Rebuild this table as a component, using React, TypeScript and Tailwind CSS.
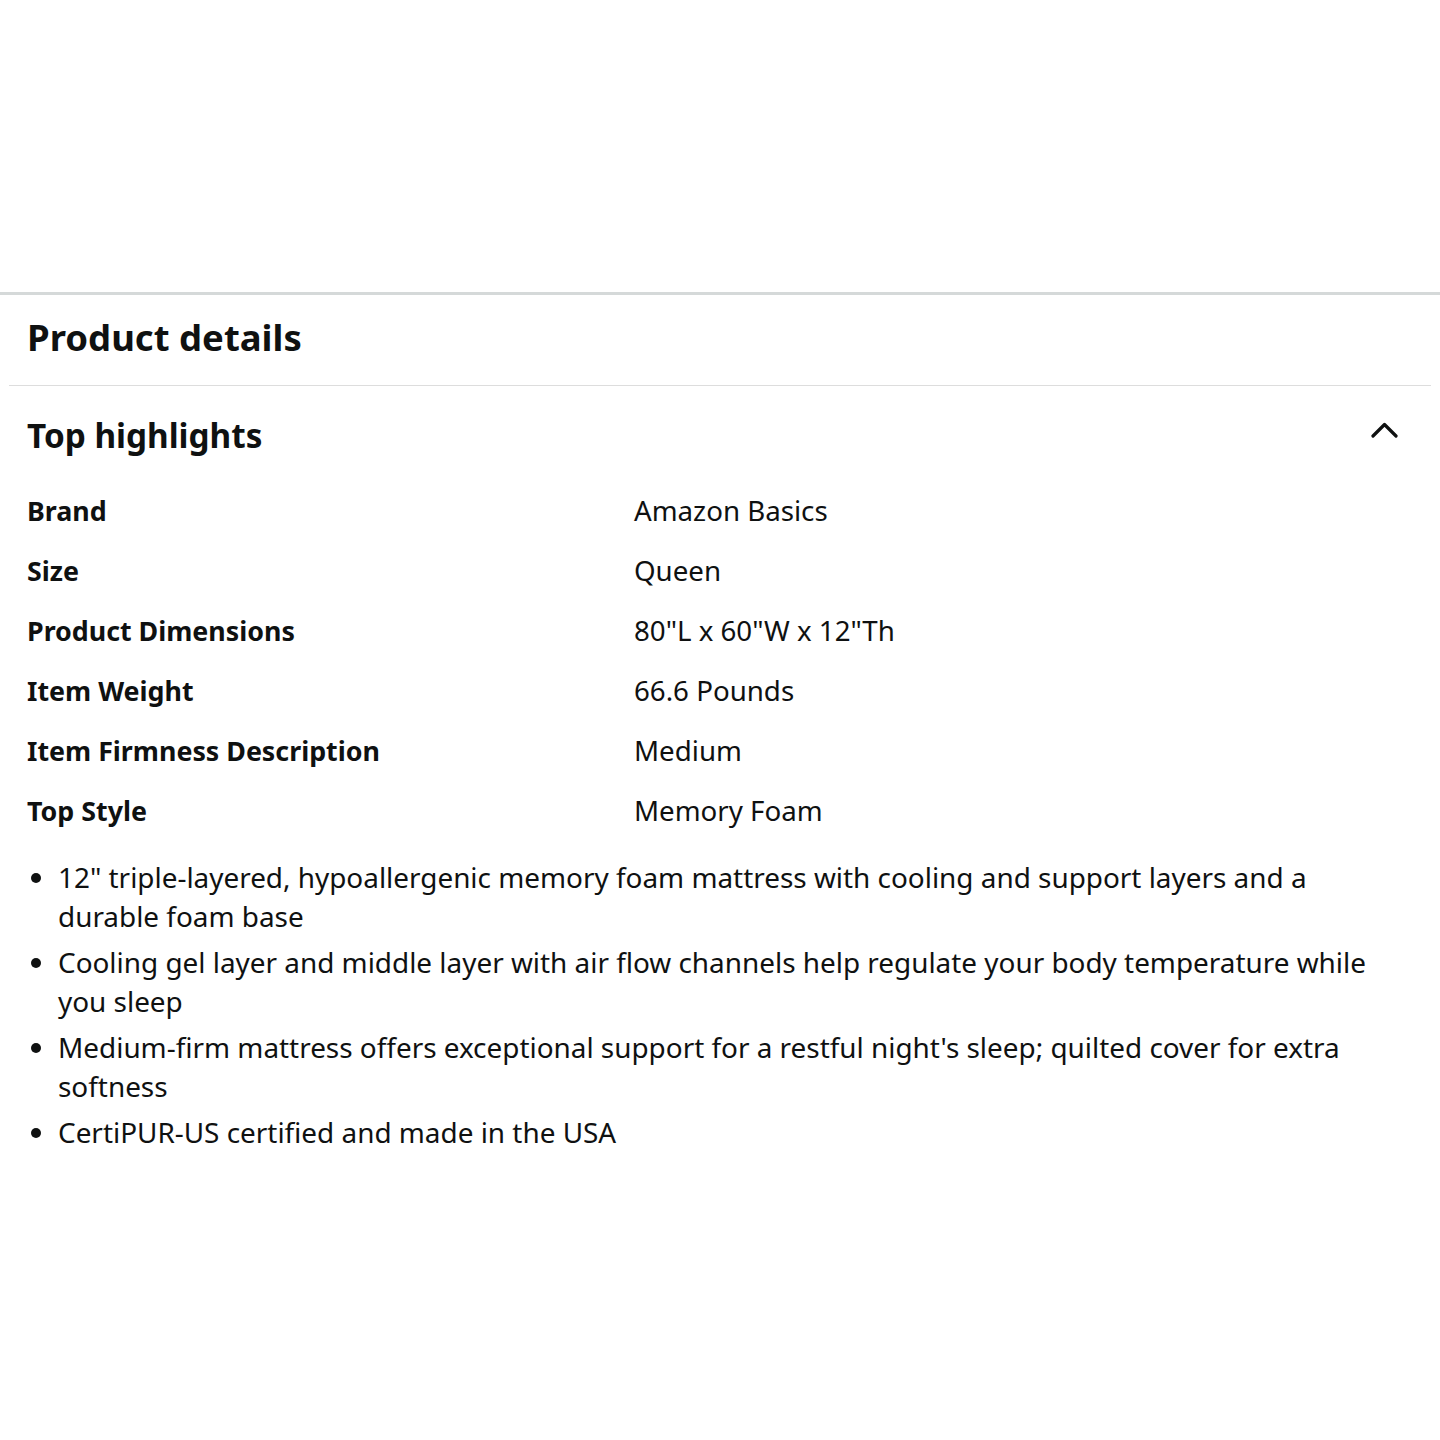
const rows: [string, string][] = [
  ['Brand', 'Amazon Basics'],
  ['Size', 'Queen'],
  ['Product Dimensions', '80"L x 60"W x 12"Th'],
  ['Item Weight', '66.6 Pounds'],
  ['Item Firmness Description', 'Medium'],
  ['Top Style', 'Memory Foam'],
]

const bullets = [
  '12" triple-layered, hypoallergenic memory foam mattress with cooling and support layers and a durable foam base',
  'Cooling gel layer and middle layer with air flow channels help regulate your body temperature while you sleep',
  "Medium-firm mattress offers exceptional support for a restful night's sleep; quilted cover for extra softness",
  'CertiPUR-US certified and made in the USA',
]

export default function App() {
  return (
    <div className="min-h-screen bg-white text-[#0f1111] font-['Noto_Sans',sans-serif]">
      <div className="h-[292px]" />
      <div className="border-t-[3px] border-[#d5d9d9]">
        <div className="h-[90px] flex items-center px-[27px] pb-[5px]">
          <h2 className="text-[36.5px] font-bold leading-none">Product details</h2>
        </div>
        <div className="mx-[9px] border-t border-[#dddddd]" />
        <div className="flex items-center justify-between pl-[27px] pr-[42px] h-[104px] pb-[4px]">
          <h3 className="text-[33.3px] font-bold leading-none">Top highlights</h3>
          <svg width="27" height="16" viewBox="0 0 27 16" className="-mt-[12px]" fill="none">
            <polyline points="2,14 13.5,2.5 25,14" stroke="#0f1111" strokeWidth="3.2" strokeLinecap="round" strokeLinejoin="round" />
          </svg>
        </div>
        <div className="px-[27px] -mt-[9px]">
          {rows.map(([k, v]) => (
            <div key={k} className="grid grid-cols-[607px_1fr] h-[60px] items-center">
              <span className="font-bold text-[26.8px]">{k}</span>
              <span className="text-[27.7px]">{v}</span>
            </div>
          ))}
        </div>
        <ul className="mt-[17px] pl-[58px] pr-[60px] list-disc text-[27.9px] leading-[39px] flex flex-col gap-[7px]">
          {bullets.map((b) => (
            <li key={b}>{b}</li>
          ))}
        </ul>
      </div>
    </div>
  )
}
